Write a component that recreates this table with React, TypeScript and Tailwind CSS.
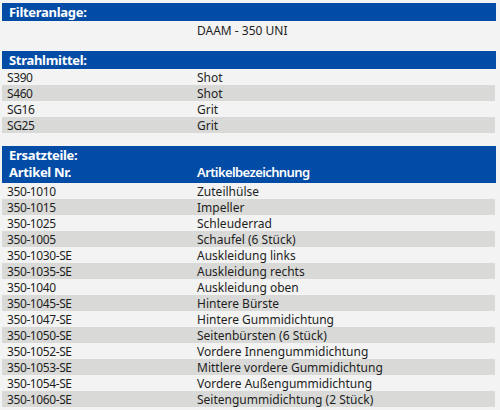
const strahlmittel = [
  ["S390", "Shot"],
  ["S460", "Shot"],
  ["SG16", "Grit"],
  ["SG25", "Grit"],
];

const ersatzteile = [
  ["350-1010", "Zuteilhülse"],
  ["350-1015", "Impeller"],
  ["350-1025", "Schleuderrad"],
  ["350-1005", "Schaufel (6 Stück)"],
  ["350-1030-SE", "Auskleidung links"],
  ["350-1035-SE", "Auskleidung rechts"],
  ["350-1040", "Auskleidung oben"],
  ["350-1045-SE", "Hintere Bürste"],
  ["350-1047-SE", "Hintere Gummidichtung"],
  ["350-1050-SE", "Seitenbürsten (6 Stück)"],
  ["350-1052-SE", "Vordere Innengummidichtung"],
  ["350-1053-SE", "Mittlere vordere Gummidichtung"],
  ["350-1054-SE", "Vordere Außengummidichtung"],
  ["350-1060-SE", "Seitengummidichtung (2 Stück)"],
];

function Bar({ children }: { children: React.ReactNode }) {
  return (
    <div className="h-[18px] bg-[#034ca6] pl-[7px] text-[13px] font-bold leading-[18px] tracking-[-0.3px] text-white">
      {children}
    </div>
  );
}

function Rows({ items }: { items: string[][] }) {
  return (
    <div className="w-[493px]">
      {items.map(([a, b], i) => (
        <div
          key={a}
          className={
            "flex h-[16px] pt-[1px] leading-[16px] " +
            (i % 2 === 1 ? "bg-[#d9dad8]" : "")
          }
        >
          <div className="w-[195px] pl-[5px] tracking-[-0.4px]">{a}</div>
          <div>{b}</div>
        </div>
      ))}
    </div>
  );
}

export default function App() {
  return (
    <div
      className="h-[410px] w-[500px] overflow-hidden bg-[#f2f3f2] pl-[2px] pt-[3px] text-[12px] text-[#1e1e1e]"
      style={{ fontFamily: '"Noto Sans", sans-serif' }}
    >
      <div className="w-[494px]">
        <Bar>Filteranlage:</Bar>
        <div className="flex h-[16px] pt-[2px] leading-[16px]">
          <div className="w-[195px]" />
          <div>DAAM - 350 UNI</div>
        </div>
        <div className="mt-[14px]">
          <Bar>Strahlmittel:</Bar>
        </div>
        <Rows items={strahlmittel} />
        <div className="mt-[13px] flex h-[37px] bg-[#034ca6] pl-[7px] pt-[1px] text-[13px] font-bold leading-[17px] tracking-[-0.3px] text-white">
          <div className="w-[188px]">
            <div>Ersatzteile:</div>
            <div>Artikel Nr.</div>
          </div>
          <div className="pt-[17px] font-semibold tracking-[-0.6px]">Artikelbezeichnung</div>
        </div>
        <Rows items={ersatzteile} />
      </div>
    </div>
  );
}
